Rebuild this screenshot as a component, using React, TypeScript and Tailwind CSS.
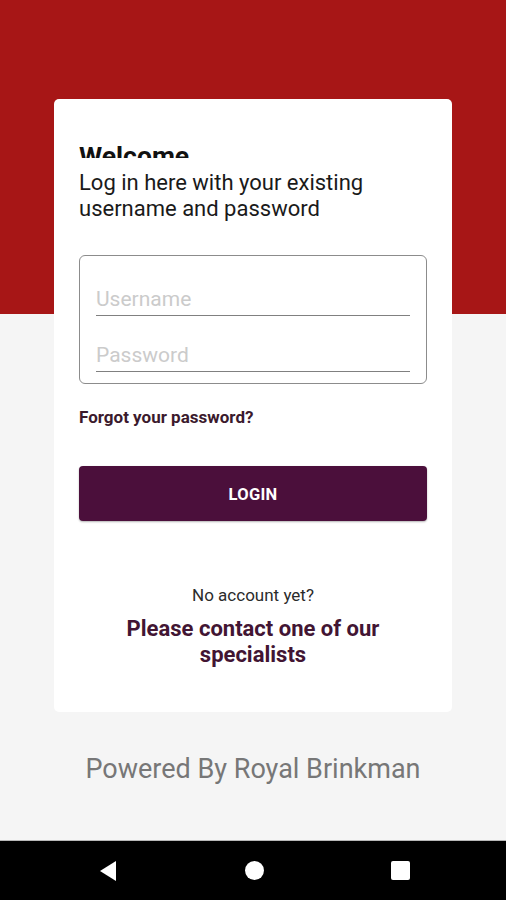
import React from "react";

export default function App() {
  return (
    <div className="h-[900px] flex flex-col font-['Roboto',sans-serif] overflow-hidden">
      {/* screen */}
      <div className="h-[840px] bg-[linear-gradient(to_bottom,#a71616_314px,#f5f5f5_314px)] flex flex-col items-center">
        <div className="mt-[99px] w-[398px] h-[613px] bg-white rounded-[5px] px-[25px] flex flex-col">
          {/* clipped title, as in the app */}
          <div className="mt-[42px] h-[17px] overflow-hidden">
            <div className="text-[26.5px] leading-[30px] font-bold text-[#111]">Welcome</div>
          </div>
          <p className="mt-[12px] text-[22px] leading-[26px] text-[#1a1a1a]">
            Log in here with your existing
            <br />
            username and password
          </p>

          <div className="mt-[33px] h-[129px] border border-[#8c8c8c] rounded-[6px] px-[16px] flex flex-col">
            <input
              placeholder="Username"
              className="mt-[26px] h-[34px] w-full border-b-[1.5px] border-[#808080] text-[21px] outline-none placeholder:text-[#cbcbcb] bg-transparent"
            />
            <input
              type="password"
              placeholder="Password"
              className="mt-[22px] h-[34px] w-full border-b-[1.5px] border-[#808080] text-[21px] outline-none placeholder:text-[#cbcbcb] bg-transparent"
            />
          </div>

          <a className="mt-[23px] text-[17px] leading-[20px] font-bold text-[#3b1a2d] self-start">Forgot your password?</a>

          <button className="mt-[39px] h-[55px] w-full rounded-[4px] bg-[#4b0f3b] pt-[3px] text-white text-[16.5px] font-bold tracking-[0.3px] shadow-[0_1px_2px_rgba(0,0,0,0.3)]">
            LOGIN
          </button>

          <p className="mt-[64px] text-center text-[17px] leading-[20px] text-[#2b2b2b]">No account yet?</p>
          <p className="mt-[11px] text-center text-[22px] leading-[26px] font-bold text-[#421533] px-[20px]">
            Please contact one of our specialists
          </p>
        </div>
        <p className="mt-[41px] text-[27px] leading-[32px] text-[#777]">Powered By Royal Brinkman</p>
      </div>
      <div className="h-px bg-[#b8b8b8]" />
      {/* android nav bar */}
      <div className="flex-1 bg-black flex items-center justify-center gap-[127px] pl-[2px]">
        <svg width="20" height="22" viewBox="0 0 20 22">
          <path d="M18 1 L2 11 L18 21 Z" fill="white" />
        </svg>
        <div className="w-[19px] h-[19px] rounded-full bg-white" />
        <div className="w-[19px] h-[19px] rounded-[2px] bg-white" />
      </div>
    </div>
  );
}
